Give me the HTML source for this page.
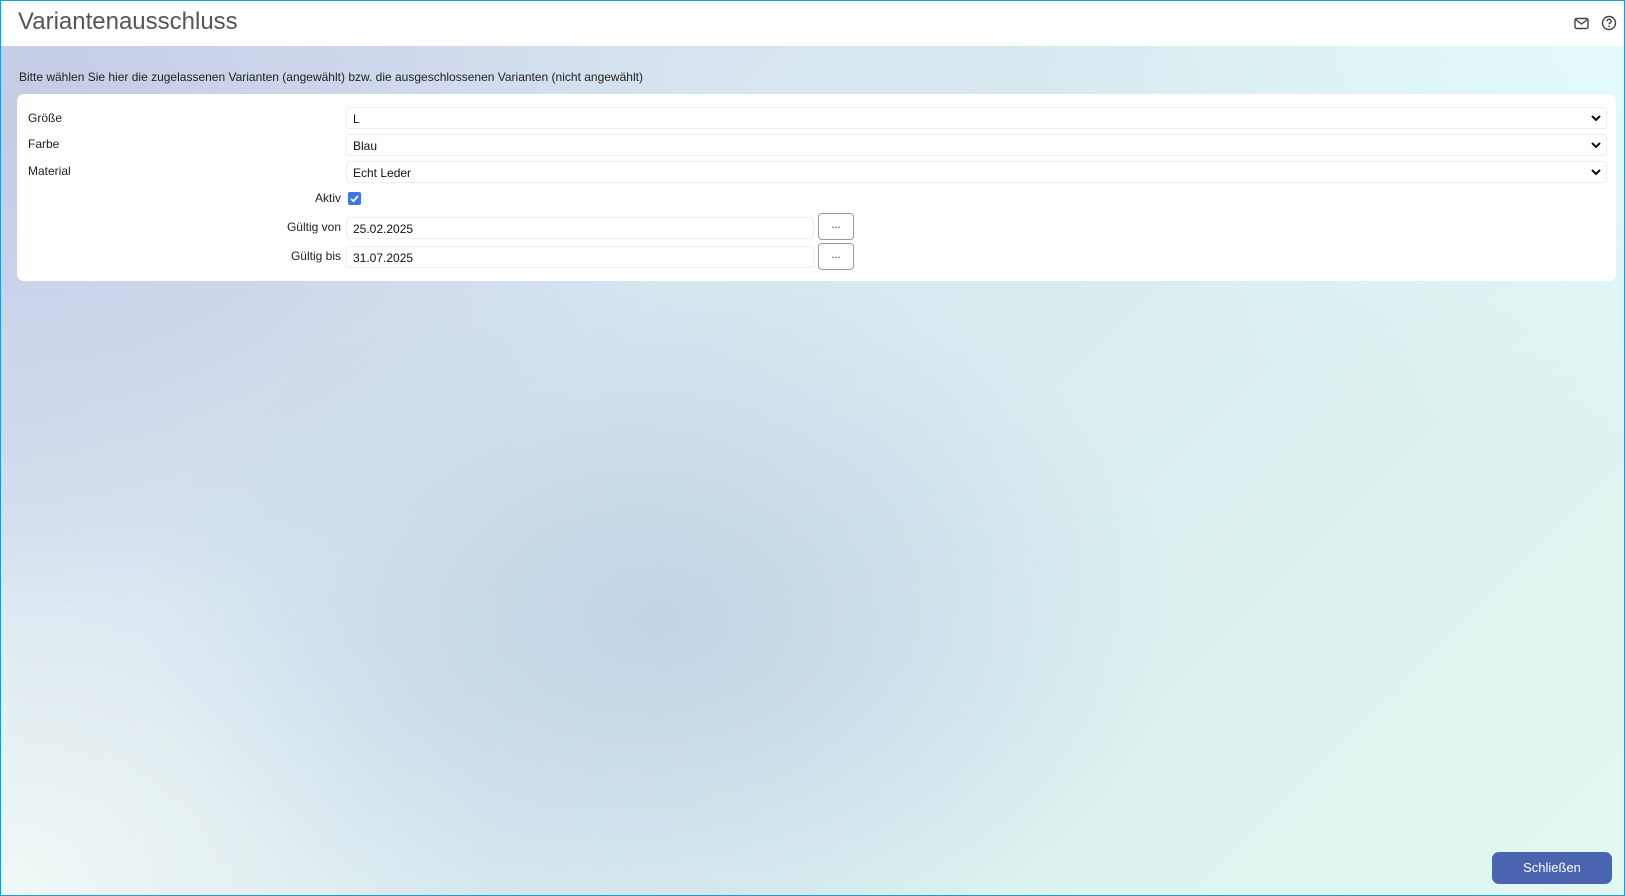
<!DOCTYPE html>
<html><head><meta charset="utf-8"><style>
*{box-sizing:border-box;margin:0;padding:0}
html,body{width:1625px;height:896px;overflow:hidden}
body{font-family:"Liberation Sans",Arial,sans-serif;position:relative;border:1px solid #1a9be0;
background:
radial-gradient(ellipse 520px 360px at 660px 620px,rgba(190,210,228,.9),rgba(190,210,228,0) 100%),
radial-gradient(ellipse 700px 500px at 0px 120px,rgba(196,204,230,1),rgba(196,204,230,0) 100%),
radial-gradient(ellipse 500px 400px at 0px 896px,rgba(240,248,246,1),rgba(240,248,246,0) 100%),
radial-gradient(ellipse 600px 400px at 1625px 50px,rgba(226,250,250,1),rgba(226,250,250,0) 100%),
linear-gradient(135deg,#d6def0 0%,#d8e8ef 45%,#dcf3f0 75%,#e2f8f1 100%);}
.hdr{position:absolute;left:0;top:0;width:1623px;height:45px;background:#fff}
.title{position:absolute;left:17px;top:7px;font-size:24px;color:#555}
.txt{position:absolute;left:18px;top:69px;font-size:12px;color:#222}
.card{position:absolute;left:16px;top:93px;width:1599px;height:187px;background:#fff;border-radius:7px}
.lbl{position:absolute;font-size:12px;color:#222}
.sel{position:absolute;left:345px;width:1261px;height:22px;border:1px solid #eee;border-radius:3px;font-size:12px;padding:4px 6px;color:#111}
.sel svg{position:absolute;right:5px;top:6px}
.inp{position:absolute;left:345px;width:468px;height:22px;border:1px solid #eee;border-radius:3px;font-size:12px;padding:4px 6px;color:#111}
.btn{position:absolute;left:817px;width:36px;height:27px;border:1px solid #999;border-radius:4px;background:#fff;font-size:11px;text-align:center;line-height:22px;color:#333}
.r{text-align:right;width:200px;left:140px}
</style></head><body>
<div class="hdr"><div class="title">Variantenausschluss</div>
<svg style="position:absolute;left:1573px;top:16px" width="15" height="13" viewBox="0 0 15 13"><rect x="1" y="1.5" width="13" height="10" rx="1.5" fill="none" stroke="#444" stroke-width="1.4"/><path d="M1.5 2.5 L7.5 7 L13.5 2.5" fill="none" stroke="#444" stroke-width="1.4"/></svg>
<svg style="position:absolute;left:1600px;top:14px" width="16" height="16" viewBox="0 0 16 16"><circle cx="8" cy="8" r="6.5" fill="none" stroke="#444" stroke-width="1.4"/><path d="M6 6.3a2 2 0 1 1 2.6 1.9c-.5.2-.6.5-.6 1.1" fill="none" stroke="#444" stroke-width="1.4"/><circle cx="8" cy="11.4" r=".9" fill="#444"/></svg>
</div>
<div class="txt">Bitte wählen Sie hier die zugelassenen Varianten (angewählt) bzw. die ausgeschlossenen Varianten (nicht angewählt)</div>
<div class="card"></div>
<div class="lbl" style="left:27px;top:110px">Größe</div>
<div class="lbl" style="left:27px;top:136px">Farbe</div>
<div class="lbl" style="left:27px;top:163px">Material</div>
<div class="sel" style="top:106px">L<svg width="10" height="8" viewBox="0 0 10 8"><path d="M1 2l4 4 4-4" fill="none" stroke="#111" stroke-width="2"/></svg></div>
<div class="sel" style="top:133px">Blau<svg width="10" height="8" viewBox="0 0 10 8"><path d="M1 2l4 4 4-4" fill="none" stroke="#111" stroke-width="2"/></svg></div>
<div class="sel" style="top:160px">Echt Leder<svg width="10" height="8" viewBox="0 0 10 8"><path d="M1 2l4 4 4-4" fill="none" stroke="#111" stroke-width="2"/></svg></div>
<div class="lbl r" style="top:190px">Aktiv</div>
<svg style="position:absolute;left:347px;top:191px" width="13" height="13" viewBox="0 0 13 13"><rect width="13" height="13" rx="2" fill="#3b76e8"/><path d="M3 6.8l2.4 2.4L10 4" fill="none" stroke="#fff" stroke-width="1.7"/></svg>
<div class="lbl r" style="top:219px">Gültig von</div>
<div class="inp" style="top:216px">25.02.2025</div>
<div class="btn" style="top:212px">...</div>
<div class="lbl r" style="top:248px">Gültig bis</div>
<div class="inp" style="top:245px">31.07.2025</div>
<div class="btn" style="top:242px">...</div>
<div style="position:absolute;left:1491px;top:851px;width:120px;height:32px;background:#4a64b2;border-radius:7px;color:#fff;font-size:13px;text-align:center;line-height:32px">Schließen</div>
</body></html>
